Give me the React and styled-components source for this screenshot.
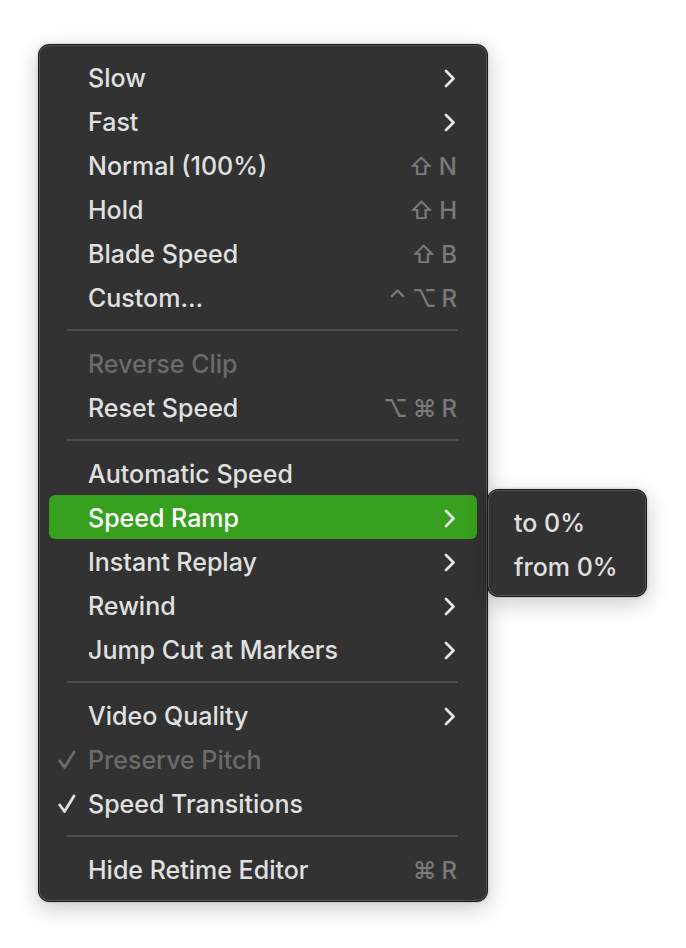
import React from "react"
import styled, { createGlobalStyle } from "styled-components"

const GlobalStyle = createGlobalStyle`
  body {
    margin: 0;
    background: #ffffff;
    font-family: Inter, "Noto Sans", "DejaVu Sans", sans-serif;
    -webkit-font-smoothing: antialiased;
  }
`

const SHIFT = "\u21E7"
const OPT = "\u2325"
const CMD = "\u2318"
const CTRL = "\u2303"

const groups = [
  [
    { label: "Slow", sub: true },
    { label: "Fast", sub: true },
    { label: "Normal (100%)", keys: [SHIFT, "N"] },
    { label: "Hold", keys: [SHIFT, "H"] },
    { label: "Blade Speed", keys: [SHIFT, "B"] },
    { label: "Custom...", keys: [CTRL, OPT, "R"] },
  ],
  [
    { label: "Reverse Clip", disabled: true },
    { label: "Reset Speed", keys: [OPT, CMD, "R"] },
  ],
  [
    { label: "Automatic Speed" },
    { label: "Speed Ramp", sub: true, active: true },
    { label: "Instant Replay", sub: true },
    { label: "Rewind", sub: true },
    { label: "Jump Cut at Markers", sub: true },
  ],
  [
    { label: "Video Quality", sub: true },
    { label: "Preserve Pitch", disabled: true, checked: true },
    { label: "Speed Transitions", checked: true },
  ],
  [{ label: "Hide Retime Editor", keys: [CMD, "R"] }],
]

const Chevron = () => (
  <svg width="12" height="19" viewBox="0 0 12 19">
    <path
      d="M2 2 L9.5 9.5 L2 17"
      fill="none"
      stroke="currentColor"
      strokeWidth="2.7"
      strokeLinecap="round"
      strokeLinejoin="round"
    />
  </svg>
)

const Check = () => (
  <svg width="18" height="20" viewBox="0 0 18 20">
    <path
      d="M1.8 11 L6.5 17.5 L16 2"
      fill="none"
      stroke="currentColor"
      strokeWidth="2.8"
      strokeLinecap="round"
      strokeLinejoin="round"
    />
  </svg>
)

const App = () => {
  return (
    <Page>
      <GlobalStyle />
      <Menu>
        {groups.map((group, gi) => (
          <React.Fragment key={gi}>
            {gi > 0 && <Separator />}
            {group.map((item) => (
              <Row key={item.label} $active={item.active} $disabled={item.disabled}>
                <CheckCol>{item.checked && <Check />}</CheckCol>
                <Label>{item.label}</Label>
                <Right>
                  {item.sub && (
                    <Arrow>
                      <Chevron />
                    </Arrow>
                  )}
                  {item.keys && (
                    <Keys>
                      {item.keys.map((k, i) => (
                        <Key key={i}>{k}</Key>
                      ))}
                    </Keys>
                  )}
                </Right>
              </Row>
            ))}
          </React.Fragment>
        ))}
      </Menu>
      <SubMenu>
        <SubRow>to 0%</SubRow>
        <SubRow>from 0%</SubRow>
      </SubMenu>
    </Page>
  )
}

export default App

const Page = styled.div`
  display: flex;
  align-items: flex-start;
  padding: 44px 0 0 38px;
  min-height: 948px;
  box-sizing: border-box;
`

const Menu = styled.div`
  width: 450px;
  box-sizing: border-box;
  padding: 10px 10px;
  background: #323232;
  border: 1px solid #1a1a1a;
  border-radius: 11px;
  box-shadow: inset 0 0 0 1px #555555, 0 6px 22px rgba(0, 0, 0, 0.22),
    0 0 3px rgba(0, 0, 0, 0.18);
  display: flex;
  flex-direction: column;
`

const Row = styled.div`
  height: 44px;
  box-sizing: border-box;
  padding-top: 2px;
  display: grid;
  grid-template-columns: 39px 1fr auto;
  align-items: center;
  padding-right: 20px;
  border-radius: 6px;
  font-size: 25px;
  font-weight: 500;
  color: ${(p) => (p.$disabled ? "#6b6b6b" : p.$active ? "#ffffff" : "#e0e0e0")};
  background: ${(p) => (p.$active ? "#37a01e" : "transparent")};
`

const CheckCol = styled.div`
  display: flex;
  justify-content: flex-end;
  padding-right: 12px;
`

const Label = styled.span`
  white-space: nowrap;
`

const Right = styled.div`
  display: flex;
  align-items: center;
`

const Arrow = styled.span`
  display: flex;
  color: #e8e8e8;
  margin-right: 1px;
`

const Keys = styled.span`
  display: flex;
  gap: 5px;
  color: #7a7a7a;
  font-size: 24px;
  font-weight: 500;
`

const Key = styled.span`
  display: inline-block;
`

const Separator = styled.div`
  height: 22px;
  display: flex;
  align-items: center;
  padding: 0 19px 0 18px;

  &::after {
    content: "";
    flex: 1;
    height: 2px;
    background: #4d4d4d;
  }
`

const SubMenu = styled.div`
  width: 160px;
  margin: 445px 0 0 -1px;
  box-sizing: border-box;
  padding: 10px 10px 8px;
  background: #323232;
  border: 1px solid #1a1a1a;
  border-radius: 11px;
  box-shadow: inset 0 0 0 1px #555555, 0 6px 22px rgba(0, 0, 0, 0.22),
    0 0 3px rgba(0, 0, 0, 0.18);
`

const SubRow = styled.div`
  height: 44px;
  box-sizing: border-box;
  padding: 2px 0 0 16px;
  display: flex;
  align-items: center;
  font-size: 25px;
  font-weight: 500;
  color: #e0e0e0;
  white-space: nowrap;
`
